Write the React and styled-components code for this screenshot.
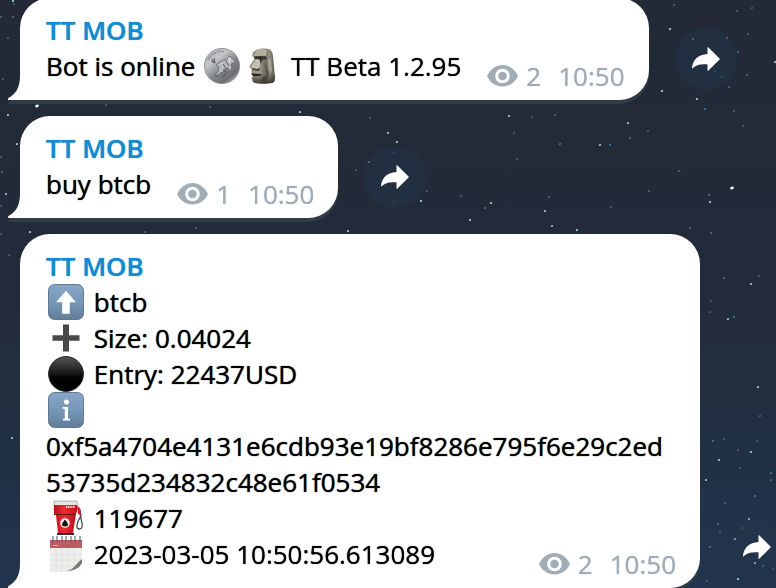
import React from "react";
import styled, { createGlobalStyle } from "styled-components";

const GlobalStyle = createGlobalStyle`
  *, *::before, *::after { box-sizing: border-box; }
  body {
    margin: 0;
    background: #222c3c;
    font-family: "Open Sans", "Noto Sans", sans-serif;
    font-size: 26px;
    line-height: 36px;
    color: #000;
  }
`;

const Chat = styled.main`
  position: relative;
  min-height: 100vh;
  overflow: hidden;
  background: linear-gradient(180deg, #232936 0%, #222b3a 50%, #22344d 100%);
`;

const Sky = styled.svg`
  position: absolute;
  left: 0;
  top: 0;
`;

const Feed = styled.div`
  position: relative;
  display: flex;
  flex-direction: column;
  gap: 16px;
  margin-top: -2px;
  padding-left: 20px;
`;

const MessageRow = styled.article`
  display: flex;
  align-items: flex-end;
  gap: 26px;
`;

const Bubble = styled.div`
  position: relative;
  max-width: 680px;
  padding: 14px 24px 16px 26px;
  background: #fff;
  border-radius: 30px 30px 30px 0;
  filter: drop-shadow(0 4px 0 #303c48);
  text-shadow: 0 0 1px currentColor;
`;

const Tail = styled.svg`
  position: absolute;
  left: -12px;
  bottom: 0;
`;

const Author = styled.div`
  color: #168acd;
  font-weight: 600;
`;

const Line = styled.div`
  overflow-wrap: anywhere;
`;

const LastLine = styled.div`
  display: flex;
  align-items: flex-end;
  justify-content: space-between;
  gap: 26px;
`;

const Meta = styled.div`
  display: flex;
  align-items: center;
  flex: none;
  margin-bottom: -10px;
  color: #a0acb6;
`;

const Views = styled.span`
  margin: 0 17px 0 8px;
`;

const Emoji = styled.svg`
  width: 36px;
  height: 36px;
  margin: 0 3px 0 2px;
  vertical-align: top;
`;

const ShareButton = styled.button`
  display: grid;
  place-items: center;
  flex: none;
  width: 62px;
  height: 62px;
  margin: 0 -12px 10px 0;
  padding: 0;
  border: 0;
  border-radius: 50%;
  background: ${(p) => (p.$faint ? "#24385033" : "#22344699")};
`;

const STARS = [
  [674, 5, 0], [737, 11, 1], [752, 8, 0], [670, 29, 3], [693, 39, 4], [727, 38, 3], [748, 34, 0],
  [738, 52, 2], [715, 71, 1], [722, 77, 2], [662, 91, 3], [697, 99, 4], [705, 109, 2], [734, 111, 0],
  [729, 87, 1], [747, 75, 0], [775, 62, 3], [509, 116, 3], [532, 117, 1], [555, 115, 1], [628, 123, 4],
  [648, 131, 1], [630, 138, 2], [514, 133, 1], [560, 144, 2], [600, 145, 3], [610, 145, 2], [517, 159, 1],
  [743, 126, 0], [679, 171, 0], [461, 196, 1], [491, 203, 3], [485, 208, 2], [470, 220, 4],
  [545, 211, 3], [552, 226, 3], [577, 230, 4], [649, 191, 0], [611, 207, 1], [549, 197, 0], [732, 188, 5],
  [709, 195, 2], [710, 202, 4], [690, 228, 0], [711, 233, 2], [724, 278, 2], [751, 284, 4], [759, 276, 1],
  [711, 301, 1], [710, 312, 1], [728, 319, 3], [734, 317, 2], [758, 387, 3], [760, 416, 0],
  [713, 441, 2], [724, 439, 1], [738, 450, 0], [751, 452, 3], [757, 441, 1], [719, 460, 4], [771, 473, 2],
  [706, 480, 3], [771, 480, 0], [755, 496, 2], [740, 468, 1], [725, 503, 0], [749, 519, 3], [742, 528, 1],
  [718, 524, 2], [735, 539, 3], [720, 532, 1], [710, 547, 2], [755, 563, 3], [763, 566, 2], [738, 579, 4],
  [707, 581, 1], [773, 569, 1], [13, 1, 4], [14, 4, 1], [1, 17, 0], [13, 17, 0], [8, 38, 1], [3, 79, 1],
  [8, 115, 4], [17, 144, 3], [1, 157, 1], [2, 172, 0], [1, 206, 1], [1, 234, 1], [9, 255, 1],
  [37, 106, 5], [106, 105, 0], [210, 107, 0], [30, 232, 4], [145, 232, 0], [196, 228, 0], [348, 231, 4],
  [300, 112, 4], [12, 438, 3], [369, 162, 3], [388, 133, 3], [397, 142, 3], [394, 153, 2], [370, 118, 1],
  [421, 201, 4], [427, 191, 1], [356, 170, 1], [394, 202, 1], [6, 194, 3],
];

const STAR_LOOK = ["#66606b", "#4e6079", "#3f7fa5", "#c0c8cd", "#a1dcf4", "#e4f6ff"];

function StarrySky() {
  return (
    <Sky width="100%" height="100%" aria-hidden="true">
      {STARS.map(([x, y, kind], i) => (
        <ellipse
          key={i}
          cx={x}
          cy={y}
          rx={kind > 4 ? 2 : 1.2}
          ry={kind > 4 ? 1.3 : 0.9}
          fill={STAR_LOOK[kind]}
          transform={`rotate(-25 ${x} ${y})`}
        />
      ))}
    </Sky>
  );
}

function Coin() {
  return (
    <Emoji viewBox="0 0 36 36" role="img" aria-label="coin">
      <defs>
        <linearGradient id="coin" x1="0" y1="0" x2=".8" y2="1">
          <stop offset="0" stopColor="#a9adb1" />
          <stop offset=".35" stopColor="#c3c6c9" />
          <stop offset=".6" stopColor="#85888c" />
          <stop offset=".85" stopColor="#6c6f73" />
          <stop offset="1" stopColor="#b2b5b7" />
        </linearGradient>
      </defs>
      <circle cx="18" cy="18" r="17.6" fill="url(#coin)" stroke="#85898c" strokeWidth=".8" />
      <path d="M4 12a15 15 0 0 1 16-8.500" fill="none" stroke="#6f7377" strokeWidth="1.4" strokeDasharray="1 1" />
      <path d="M16 14q3-2 6-2l4-4 2 3 3 1-1 3-3 1 1 4-2 3-2-3-4 1-1 3-3 3-5 1 3-4 1-5-3-2z" fill="#b9bdc0" stroke="#66696d" strokeWidth=".8" />
      <path d="m22 13 3 5m-6-2 3 4m-4 4-6 5m9-4-2 4 3-2m-2-4 4 2M8 11l3 4m-1-5 1 5m-4-2 4 2" stroke="#55585c" fill="none" />
      <path d="m24 10 3 1-3 3" stroke="#f2f4f5" fill="none" />
    </Emoji>
  );
}

function Moai() {
  return (
    <Emoji viewBox="0 0 36 36" role="img" aria-label="moai">
      <defs>
        <linearGradient id="moai" x1="0" x2="1">
          <stop offset="0" stopColor="#8d8c7c" />
          <stop offset=".35" stopColor="#a3a18f" />
          <stop offset=".6" stopColor="#6f6e62" />
          <stop offset=".8" stopColor="#8f8d7d" />
          <stop offset="1" stopColor="#55544a" />
        </linearGradient>
        <linearGradient id="moai-shade" x1="0" y1="0" x2="0" y2="1">
          <stop offset=".7" stopColor="#22221d" stopOpacity="0" />
          <stop offset="1" stopColor="#22221d" stopOpacity=".8" />
        </linearGradient>
      </defs>
      <path id="head" d="M12 1.500Q18-.5 25 1.500q2 1 3 6l2 22q0 5-3 5.500-9 1.500-17 0-3-1-3-5l1-2-2-2 1-2-1-1 1-2-2-1q-1-2 1-4l4-6-3-2 1-4z" fill="url(#moai)" />
      <path d="M12 2q5-2 10 0l-1 6q-5-1-12 0z" fill="#b1af9d" />
      <path d="M9 8.500q6-1 12 0l1 3q-3-1-5 1l-1 3-3-4-4-1z" fill="#34332c" />
      <path d="m12 11 3 1v7l-2 3-7-1 1-4z" fill="#c4c2af" />
      <path d="m6 20 7 1 2-2-1 4-6-1z" fill="#3a3932" />
      <path d="M6.500 25.500 15 26l2 1-3 1H8z" fill="#24231f" />
      <path d="M23 11q3-1 3 2l1 10q-2 2-3-1z" fill="#a5a392" />
      <path d="M20 13q1 8 1 14l-5 6q8-1 8-8z" fill="#4a4940" opacity=".7" />
      <path d="M12 1.500Q18-.5 25 1.500q2 1 3 6l2 22q0 5-3 5.500-9 1.500-17 0-3-1-3-5l6-10z" fill="url(#moai-shade)" />
    </Emoji>
  );
}

function Tile({ id, label, children }) {
  return (
    <Emoji viewBox="0 0 36 36" role="img" aria-label={label}>
      <defs>
        <linearGradient id={id} x1="0" y1="0" x2="0" y2="1">
          <stop offset="0" stopColor="#89a6c7" />
          <stop offset=".5" stopColor="#7797b8" />
          <stop offset="1" stopColor="#607d99" />
        </linearGradient>
      </defs>
      <rect x=".5" y=".5" width="35" height="35" rx="6" fill={`url(#${id})`} stroke="#607991" />
      {children}
    </Emoji>
  );
}

function ArrowUp() {
  return (
    <Tile id="tile-up" label="up">
      <path d="m18 6.7 10 11.6h-6.2v11.5h-7.6V18.3H8z" fill="#fff" />
    </Tile>
  );
}

function Info() {
  return (
    <Tile id="tile-info" label="info">
      <circle cx="18.5" cy="10" r="2.5" fill="#fff" />
      <path d="M14.5 15H20v11.5l2 .3v1.7h-7v-1.7l1.8-.3V17l-2.3-.4z" fill="#fff" />
    </Tile>
  );
}

function Plus() {
  return (
    <Emoji viewBox="0 0 36 36" role="img" aria-label="plus">
      <path d="M15 4.5h6v10.7h10.500v5.6H21v10.7h-6V20.8H4.500v-5.6H15z" fill="#484848" />
    </Emoji>
  );
}

function BlackCircle() {
  return (
    <Emoji viewBox="0 0 36 36" role="img" aria-label="black circle">
      <defs>
        <linearGradient id="ball" x1="0" y1="0" x2="0" y2="1">
          <stop offset="0" stopColor="#555" />
          <stop offset=".5" stopColor="#161616" />
          <stop offset=".6" stopColor="#000" />
          <stop offset="1" stopColor="#000" />
        </linearGradient>
      </defs>
      <circle cx="18" cy="18" r="17.4" fill="url(#ball)" stroke="#222" />
    </Emoji>
  );
}

function FuelPump() {
  return (
    <Emoji viewBox="0 0 36 36" role="img" aria-label="fuel">
      <defs>
        <linearGradient id="pump" x1="0" x2="1">
          <stop offset="0" stopColor="#b8131c" />
          <stop offset=".45" stopColor="#ef2b34" />
          <stop offset="1" stopColor="#bc101a" />
        </linearGradient>
      </defs>
      <path d="m29 8 3 2 1 6q-3 4-4 9-1 4 3 4 3-1 2-6l-2-9" fill="none" stroke="#4d4e50" strokeWidth="1.3" />
      <path d="M6 1h23l1 6-2 3H6z" fill="#e6e5e3" stroke="#88888a" strokeWidth=".6" />
      <path d="M6 5h23v6l-1 3H6z" fill="url(#pump)" />
      <path d="M6 14h22l-3 19H10L8 15z" fill="url(#pump)" />
      <path d="M6 14.5h22" stroke="#6e1318" />
      <path d="M9 33h17v2H9z" fill="#332d2d" />
      <path d="M18 7h9" stroke="#f7d7d7" strokeWidth="2" strokeDasharray="1.2 .5" />
      <path d="m29 6 3 2 1 7-3-1z" fill="#d71e28" />
      <circle cx="17" cy="23" r="4.8" fill="#f2eeee" />
      <path d="M17 19.5q6 7 0 7t0-7" fill="#111" />
    </Emoji>
  );
}

function Calendar() {
  return (
    <Emoji viewBox="0 0 36 36" role="img" aria-label="calendar">
      <path d="M2 4h32v32H2z" fill="#eeeeed" />
      <path d="M2 4h32v8H2z" fill="#bd5d61" />
      <path d="M2 18h32M2 24h32M2 30h32M8 12v24M14 12v24M20 12v24M26 12v24" stroke="#dadada" strokeWidth=".8" />
      <path d="M34 23q-2 10-15 13h15z" fill="#fafafa" />
      <path d="M34 23q-5 4-7 7-3 4-9 5 12 0 16-8z" fill="#777" />
      <path d="M5 0v4m4-4v4m5-4v4m4-4v4m5-4v4m4-4v4m5-4v4" stroke="#fff" strokeWidth="2.500" />
      <path d="M5 0v6m4-6v6m5-6v6m4-6v6m5-6v6m4-6v6m5-6v6" stroke="#465660" strokeWidth="1" />
      <path d="M5 9.500h5" stroke="#e6b2b0" />
    </Emoji>
  );
}

function Eye() {
  return (
    <svg width="31" height="22" viewBox="0 0 31 22" aria-hidden="true">
      <path d="M0 11C3 4.500 9 0 15.500 0S28 4.500 31 11c-3 6.500-9 10.500-15.500 10.500S3 17.500 0 11z" fill="currentColor" />
      <circle cx="15.500" cy="11" r="7.300" fill="#fff" />
      <circle cx="15.500" cy="11" r="4.300" fill="currentColor" />
    </svg>
  );
}

function ShareArrow() {
  return (
    <svg width="28" height="24" viewBox="0 0 28 24" aria-hidden="true">
      <path d="M15.500.3Q16 0 16.500.5L28 12 16.500 23.500q-.5.500-1 .2V17.300C9 17.200 4.500 17.500.8 21.300Q0 22 0 20.800C1 12.500 6 7.500 15.500 7z" fill="#fff" />
    </svg>
  );
}

function Message({ lines, last, views, faintShare }) {
  return (
    <MessageRow>
      <Bubble>
        <Tail width="13" height="24" viewBox="0 0 13 24" aria-hidden="true">
          <path d="M12 0Q12 16 .5 22 0 22.500 0 24h13V0z" fill="#fff" />
        </Tail>
        <Author>TT MOB</Author>
        {lines}
        <LastLine>
          <div>{last}</div>
          <Meta>
            <Eye />
            <Views>{views}</Views>
            <time>10:50</time>
          </Meta>
        </LastLine>
      </Bubble>
      <ShareButton type="button" aria-label="Share" $faint={faintShare}>
        <ShareArrow />
      </ShareButton>
    </MessageRow>
  );
}

export default function App() {
  return (
    <Chat>
      <GlobalStyle />
      <StarrySky />
      <Feed>
        <Message last={<>Bot is online <Coin /><Moai /> TT Beta 1.2.95</>} views={2} />
        <Message last="buy btcb" views={1} />
        <Message
          faintShare
          views={2}
          lines={
            <>
              <Line><ArrowUp /> btcb</Line>
              <Line><Plus /> Size: 0.04024</Line>
              <Line><BlackCircle /> Entry: 22437USD</Line>
              <Line><Info /> 0xf5a4704e4131e6cdb93e19bf8286e795f6e29c2ed53735d234832c48e61f0534</Line>
              <Line><FuelPump /> 119677</Line>
            </>
          }
          last={<><Calendar /> 2023-03-05 10:50:56.613089</>}
        />
      </Feed>
    </Chat>
  );
}
